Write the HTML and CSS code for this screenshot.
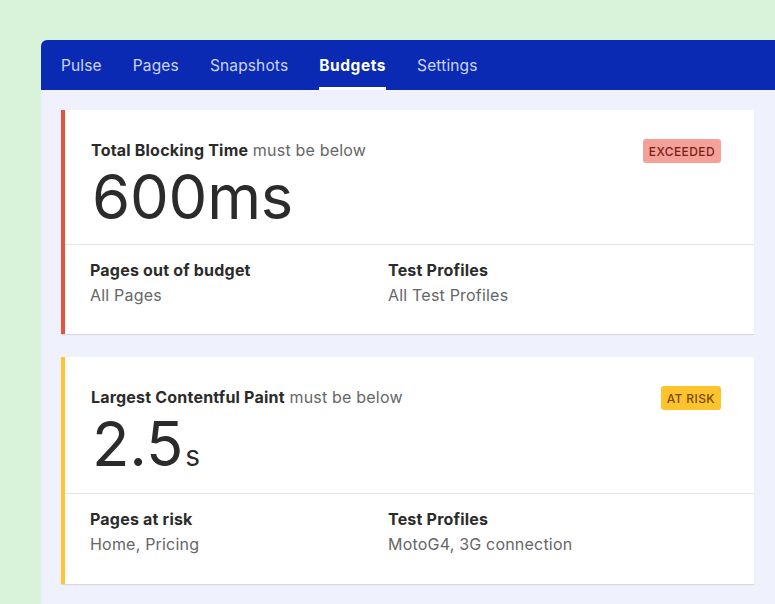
FILE: index.html
```html
<!DOCTYPE html>
<html>
<head>
<meta charset="utf-8">
<link rel="stylesheet" href="styles.css">
</head>
<body>
<div class="panel">
  <nav class="nav">
    <a class="nav-item">Pulse</a>
    <a class="nav-item">Pages</a>
    <a class="nav-item">Snapshots</a>
    <a class="nav-item active">Budgets</a>
    <a class="nav-item">Settings</a>
  </nav>
  <main class="content">
    <section class="card card-exceeded">
      <div class="card-top">
        <div class="metric">
          <div class="metric-title"><strong>Total Blocking Time</strong> must be below</div>
          <div class="metric-value">600ms</div>
        </div>
        <span class="badge badge-exceeded">Exceeded</span>
      </div>
      <div class="card-bottom">
        <div class="detail">
          <div class="detail-label">Pages out of budget</div>
          <div class="detail-value">All Pages</div>
        </div>
        <div class="detail">
          <div class="detail-label">Test Profiles</div>
          <div class="detail-value">All Test Profiles</div>
        </div>
      </div>
    </section>
    <section class="card card-risk">
      <div class="card-top">
        <div class="metric">
          <div class="metric-title"><strong>Largest Contentful Paint</strong> must be below</div>
          <div class="metric-value">2.5<span class="unit">s</span></div>
        </div>
        <span class="badge badge-risk">At risk</span>
      </div>
      <div class="card-bottom">
        <div class="detail">
          <div class="detail-label">Pages at risk</div>
          <div class="detail-value">Home, Pricing</div>
        </div>
        <div class="detail">
          <div class="detail-label">Test Profiles</div>
          <div class="detail-value">MotoG4, 3G connection</div>
        </div>
      </div>
    </section>
  </main>
</div>
</body>
</html>
```
FILE: styles.css
```css
html, body {
  margin: 0;
  padding: 0;
  height: 100%;
  overflow: hidden;
}
body {
  background: #d8f3da;
  font-family: Inter, "Noto Sans", sans-serif;
  color: #2b2b2b;
  padding-top: 40px;
  box-sizing: border-box;
}
.panel {
  margin-left: 41px;
  background: #eff1fc;
  border-top-left-radius: 6px;
  overflow: hidden;
  height: 100%;
}
.nav {
  background: #0a2ab3;
  height: 50px;
  display: flex;
  align-items: stretch;
  gap: 31px;
  padding-left: 20px;
}
.nav-item {
  display: flex;
  align-items: center;
  font-size: 15.5px;
  color: #cdd4f6;
  letter-spacing: 0.15px;
  border-bottom: 3px solid transparent;
  padding-top: 3px;
  box-sizing: border-box;
}
.nav-item.active {
  color: #ffffff;
  font-weight: 700;
  letter-spacing: 0.55px;
  border-bottom-color: #ffffff;
}
.content {
  padding: 20px 0 0 20px;
  display: flex;
  flex-direction: column;
  gap: 23px;
}
.card {
  width: 693px;
  background: #ffffff;
  border-left: 4px solid #e4533b;
  box-sizing: border-box;
  box-shadow: 0 1px 1px rgba(0, 0, 0, 0.1);
}
.card-risk {
  border-left-color: #fdc52f;
}
.card-top {
  display: flex;
  justify-content: space-between;
  align-items: flex-start;
  padding: 30px 33px 10px 26px;
  border-bottom: 1px solid #e6e6ea;
}
.card-risk .card-top {
  padding-bottom: 12px;
}
.metric-title {
  font-size: 16px;
  line-height: 20px;
  color: #666;
  letter-spacing: 0.2px;
}
.metric-title strong {
  color: #2b2b2b;
  font-weight: 700;
}
.metric-value {
  font-size: 61.5px;
  line-height: 74px;
  font-weight: 400;
  color: #2b2b2b;
  margin-left: 1px;
  letter-spacing: -0.2px;
}
.unit {
  font-size: 28px;
  line-height: 0;
  margin-left: 2px;
}
.badge {
  margin-top: -1px;
  height: 24px;
  display: inline-flex;
  align-items: center;
  padding: 0 6px;
  border-radius: 3px;
  font-size: 12px;
  font-weight: 500;
  text-transform: uppercase;
  letter-spacing: 0.4px;
}
.badge-exceeded {
  background: #f4a19a;
  color: #7b1e12;
}
.badge-risk {
  background: #fec42e;
  color: #7a4a00;
}
.card-bottom {
  display: grid;
  grid-template-columns: 298px 1fr;
  padding: 14px 26px 28px 25px;
}
.card-risk .card-bottom {
  padding-bottom: 29px;
}
.detail-label {
  font-size: 16px;
  font-weight: 700;
  line-height: 22px;
  letter-spacing: 0.2px;
  color: #2b2b2b;
}
.detail-value {
  font-size: 16px;
  line-height: 22px;
  margin-top: 3px;
  letter-spacing: 0.2px;
  color: #666;
}
```
